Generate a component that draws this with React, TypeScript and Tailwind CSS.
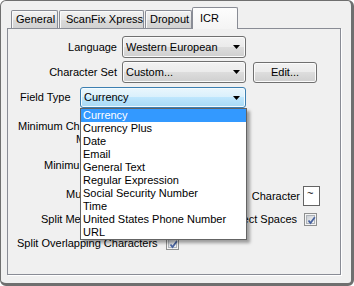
import React from "react";

function Arrow() {
  return (
    <svg width="7" height="4" viewBox="0 0 7 4" className="shrink-0">
      <polygon points="0,0 7,0 3.5,4" fill="#000" />
    </svg>
  );
}

function Combo({ text, width, active }: { text: string; width: string; active?: boolean }) {
  return (
    <div
      className={
        active
          ? `${width} h-full rounded-[3px] border border-[#3c7fb1] bg-[linear-gradient(#eaf6fd,#d9f0fc_50%,#bee6fd_50%,#a7d9f5)] shadow-[inset_0_0_0_1px_#f4fbfe] flex items-center pl-[3px] pr-[5px]`
          : `${width} h-full rounded-[3px] border border-[#707070] bg-[linear-gradient(#f2f2f2,#ebebeb_50%,#dddddd_50%,#cfcfcf)] shadow-[inset_0_0_0_1px_#fbfbfb] flex items-center pl-[3px] pr-[5px]`
      }
    >
      <span className="flex-1 whitespace-nowrap overflow-hidden">{text}</span>
      <Arrow />
    </div>
  );
}

function Check() {
  return (
    <div className="w-[13px] h-[13px] border border-[#8e8f8f] bg-[#f4f4f4] p-[1px] shrink-0">
      <div className="w-full h-full border border-[#aeb3b9] bg-[linear-gradient(135deg,#cbcfd5,#f6f6f6)] relative">
        <svg width="11" height="11" viewBox="0 0 11 11" className="absolute left-[-1px] top-[-1px]">
          <path d="M2.5 5.5 L4.5 8 L8.8 2.2" fill="none" stroke="#4a64a0" strokeWidth="1.8" />
        </svg>
      </div>
    </div>
  );
}

const items = [
  "Currency",
  "Currency Plus",
  "Date",
  "Email",
  "General Text",
  "Regular Expression",
  "Social Security Number",
  "Time",
  "United States Phone Number",
  "URL",
];

export default function App() {
  return (
    <div className="w-[354px] h-[286px] relative overflow-hidden bg-[#f0f0f0] border-l border-t border-r-[3px] border-b-[3px] border-[#6f6f6f] rounded-[6px] text-[11px] leading-[13px] text-black font-['Liberation_Sans',Arial,sans-serif]">
      <div className="pt-[6px]">
        {/* tab strip */}
        <div className="flex items-end h-[21px] pl-[10px]">
          <div className="w-[47px] h-[18px] border border-b-0 border-[#898c95] rounded-t-[2px] bg-[linear-gradient(#f3f3f3,#e6e6e6_50%,#dadada_50%,#d2d2d2)] shadow-[inset_1px_1px_0_#fafafa] pl-[4px] pt-[2px] whitespace-nowrap">
            General
          </div>
          <div className="ml-[1px] w-[85px] h-[18px] border border-b-0 border-[#898c95] rounded-t-[2px] bg-[linear-gradient(#f3f3f3,#e6e6e6_50%,#dadada_50%,#d2d2d2)] shadow-[inset_1px_1px_0_#fafafa] pl-[6px] pt-[2px] whitespace-nowrap">
            ScanFix Xpress
          </div>
          <div className="ml-[1px] w-[47px] h-[18px] border border-b-0 border-[#898c95] rounded-t-[2px] bg-[linear-gradient(#f3f3f3,#e6e6e6_50%,#dadada_50%,#d2d2d2)] shadow-[inset_1px_1px_0_#fafafa] pl-[4px] pt-[2px] whitespace-nowrap overflow-hidden">
            Dropout
          </div>
          <div className="relative z-10 -mb-[1px] w-[46px] h-[22px] border border-b-0 border-[#898c95] rounded-t-[2px] bg-[linear-gradient(#fdfdfd,#f4f4f4)] pl-[7px] pt-[4px]">
            ICR
          </div>
        </div>

        {/* panel */}
        <div className="ml-[6px] w-[334px] h-[247px] border border-[#898c95] bg-[#f0f0f0] shadow-[1px_1px_0_#ffffff] flex flex-col">
          <div className="flex items-center h-[22px] mt-[7px]">
            <div className="w-[109px] text-right">Language</div>
            <div className="ml-[5px] h-full">
              <Combo text="Western European" width="w-[124px]" />
            </div>
          </div>

          <div className="flex items-center h-[22px] mt-[3px]">
            <div className="w-[109px] text-right">Character Set</div>
            <div className="ml-[5px] h-full">
              <Combo text="Custom..." width="w-[124px]" />
            </div>
            <div className="ml-[7px] self-start mt-[1px] w-[64px] h-[21px] rounded-[3px] border border-[#707070] bg-[linear-gradient(#f2f2f2,#ebebeb_50%,#dddddd_50%,#cfcfcf)] shadow-[inset_0_0_0_1px_#fbfbfb] flex items-center justify-center">
              Edit...
            </div>
          </div>

          <div className="flex items-center h-[21px] mt-[4px]">
            <div className="w-[72px] pl-[12px] whitespace-nowrap">Field Type</div>
            <div className="h-full">
              <Combo text="Currency" width="w-[166px]" active />
            </div>
          </div>

          <div className="h-[13px] mt-[12px] w-[72px] overflow-hidden pl-[10px] whitespace-nowrap">Minimum Ch</div>
          <div className="h-[13px] w-[72px] overflow-hidden pl-[68px] whitespace-nowrap">M</div>
          <div className="h-[13px]" />
          <div className="h-[13px] w-[72px] overflow-hidden pl-[36px] whitespace-nowrap">Minimu</div>
          <div className="h-[13px]" />

          <div className="flex items-center h-[20px] mt-[1px]">
            <div className="w-[72px] overflow-hidden pl-[58px] self-start pt-[2px] whitespace-nowrap">Mu</div>
            <div className="flex items-center ml-auto mr-[20px]">
              <span className="whitespace-nowrap">Character</span>
              <div className="ml-[3px] w-[17px] h-[20px] border border-[#646464] bg-white pl-[3px] leading-[12px]">~</div>
            </div>
          </div>

          <div className="flex items-center h-[15px] mt-[6px]">
            <div className="w-[72px] overflow-hidden pl-[33px] whitespace-nowrap">Split Me</div>
            <div className="flex items-center ml-auto mr-[23px]">
              <div className="w-[50px] flex justify-end overflow-hidden whitespace-nowrap">ect Spaces</div>
              <div className="ml-[7px]">
                <Check />
              </div>
            </div>
          </div>

          <div className="flex items-center h-[15px] mt-[9px] pl-[9px]">
            <span className="whitespace-nowrap">Split Overlapping Characters</span>
            <div className="ml-[8px]">
              <Check />
            </div>
          </div>
        </div>
      </div>

      {/* dropdown list */}
      <div className="absolute z-20 left-[79px] top-[107px] w-[167px] h-[132px] border border-[#646464] bg-white shadow-[3px_3px_3px_rgba(0,0,0,0.35)] flex flex-col">
        {items.map((it, i) => (
          <div
            key={it}
            className={
              i === 0
                ? "h-[13px] leading-[13px] pl-[2px] bg-[#3399ff] text-white whitespace-nowrap"
                : "h-[13px] leading-[13px] pl-[2px] whitespace-nowrap"
            }
          >
            {it}
          </div>
        ))}
      </div>
    </div>
  );
}
